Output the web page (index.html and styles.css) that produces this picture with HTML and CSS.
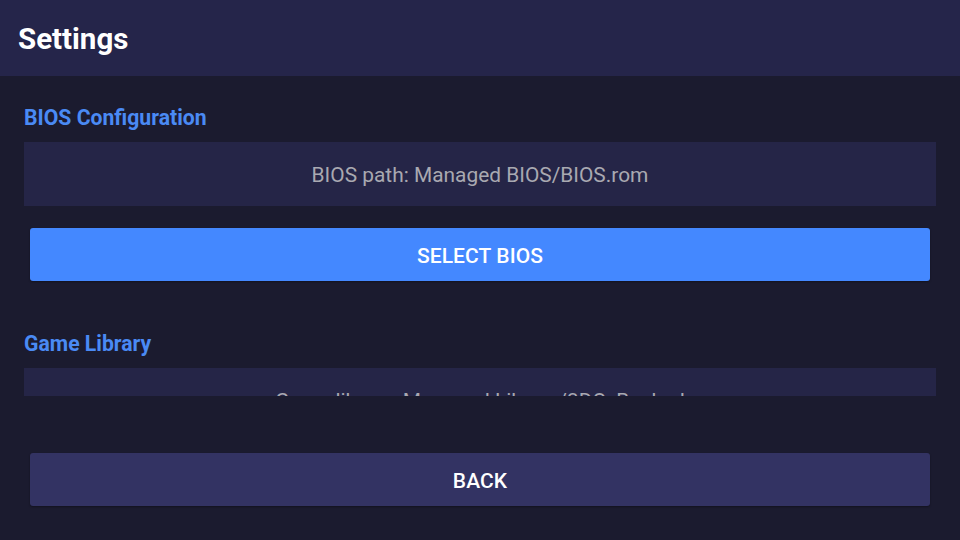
FILE: index.html
```html
<!DOCTYPE html>
<html>
<head>
<meta charset="utf-8">
<link rel="stylesheet" href="styles.css">
</head>
<body>
<div class="app">
  <header class="topbar"><h1 class="title">Settings</h1></header>
  <main class="scroll">
    <section class="section">
      <h2 class="section-title">BIOS Configuration</h2>
      <div class="info">BIOS path: Managed BIOS/BIOS.rom</div>
      <button class="btn btn-primary">SELECT BIOS</button>
    </section>
    <section class="section section-next">
      <h2 class="section-title">Game Library</h2>
      <div class="info">Game library: Managed Library/3DO_Backed</div>
    </section>
  </main>
  <footer class="footer">
    <button class="btn btn-secondary">BACK</button>
  </footer>
</div>
</body>
</html>
```

FILE: styles.css
```css
* { box-sizing: border-box; }
html, body { margin: 0; padding: 0; }
body {
  background: #1b1b2f;
  font-family: Roboto, "Noto Sans", "Liberation Sans", sans-serif;
  width: 960px;
  height: 540px;
  overflow: hidden;
}
.app {
  display: flex;
  flex-direction: column;
  height: 540px;
}
.topbar {
  height: 76px;
  flex: none;
  background: #25254a;
  display: flex;
  align-items: center;
  padding-left: 18px;
}
.title {
  margin: 0;
  color: #ffffff;
  font-size: 29.5px;
  font-weight: 700;
  line-height: 1;
  padding-top: 4px;
}
.scroll {
  height: 320px;
  flex: none;
  overflow: hidden;
  padding: 24px 24px 0;
}
.section {
  display: flex;
  flex-direction: column;
}
.section-next { margin-top: 45px; }
.section-title {
  margin: 0;
  color: #4a8af4;
  font-size: 21.2px;
  font-weight: 700;
  line-height: 34px;
  padding-top: 1px;
}
.info {
  margin-top: 7px;
  height: 64px;
  background: #252547;
  color: #a9a9b1;
  font-size: 20.9px;
  display: flex;
  align-items: center;
  justify-content: center;
  padding-top: 2px;
}
.btn {
  border: none;
  border-radius: 3px;
  height: 53px;
  font-family: inherit;
  font-size: 21px;
  font-weight: 500;
  letter-spacing: 0.1px;
  color: #ffffff;
  display: flex;
  align-items: center;
  justify-content: center;
  padding-top: 4px;
  box-shadow: 0 1px 2px rgba(0,0,0,0.35);
}
.btn-primary {
  margin: 22px 6px 0;
  background: #4488ff;
}
.btn-secondary {
  width: 100%;
  background: #333363;
}
.footer {
  flex: 1;
  padding: 57px 30px 0;
}
```
